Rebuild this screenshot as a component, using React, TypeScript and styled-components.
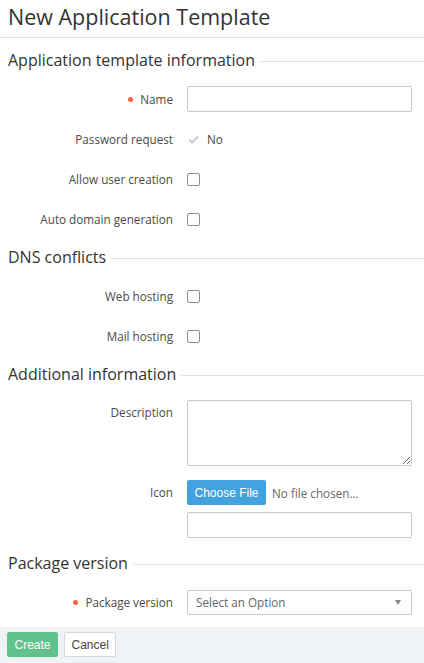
import React from 'react'
import styled, { createGlobalStyle } from 'styled-components'

const GlobalStyle = createGlobalStyle`
	html, body {
		margin: 0;
		padding: 0;
		background: #fff;
	}
	body {
		font-family: 'Open Sans', 'Noto Sans', sans-serif;
		color: #444;
	}
	* {
		box-sizing: border-box;
	}
`

const App: React.FC = () => {
	return (
		<StyledPage>
			<GlobalStyle />
			<StyledHeader>
				<StyledTitle>New Application Template</StyledTitle>
			</StyledHeader>
			<StyledForm>
				<StyledSection>
					<SectionTitle>Application template information</SectionTitle>
					<Field label="Name" required>
						<StyledInput type="text" />
					</Field>
					<Field label="Password request">
						<StyledStatic>
							<CheckIcon />
							<span>No</span>
						</StyledStatic>
					</Field>
					<Field label="Allow user creation">
						<StyledCheckbox type="checkbox" />
					</Field>
					<Field label="Auto domain generation">
						<StyledCheckbox type="checkbox" />
					</Field>
				</StyledSection>

				<StyledSection>
					<SectionTitle>DNS conflicts</SectionTitle>
					<Field label="Web hosting">
						<StyledCheckbox type="checkbox" />
					</Field>
					<Field label="Mail hosting">
						<StyledCheckbox type="checkbox" />
					</Field>
				</StyledSection>

				<StyledSection>
					<SectionTitle>Additional information</SectionTitle>
					<Field label="Description" top>
						<StyledTextarea />
					</Field>
					<Field label="Icon" top>
						<StyledStack>
							<StyledFileRow>
								<StyledFileButton type="button">Choose File</StyledFileButton>
								<StyledFileText>No file chosen...</StyledFileText>
							</StyledFileRow>
							<StyledInput type="text" />
						</StyledStack>
					</Field>
				</StyledSection>

				<StyledSection>
					<SectionTitle>Package version</SectionTitle>
					<Field label="Package version" required>
						<StyledSelect>
							<span>Select an Option</span>
							<StyledCaret />
						</StyledSelect>
					</Field>
				</StyledSection>
			</StyledForm>
			<StyledFooter>
				<StyledButton variant="primary">Create</StyledButton>
				<StyledButton>Cancel</StyledButton>
			</StyledFooter>
		</StyledPage>
	)
}

const SectionTitle: React.FC<{ children: React.ReactNode }> = ({ children }) => (
	<StyledSectionTitle>
		<span>{children}</span>
		<StyledRule />
	</StyledSectionTitle>
)

interface FieldProps {
	label: string
	required?: boolean
	top?: boolean
	children: React.ReactNode
}

const Field: React.FC<FieldProps> = ({ label, required, top, children }) => (
	<StyledRow>
		<StyledLabel $top={top}>
			{required && <StyledDot />}
			{label}
		</StyledLabel>
		<StyledControl>{children}</StyledControl>
	</StyledRow>
)

const CheckIcon: React.FC = () => (
	<svg width="11" height="9" viewBox="0 0 11 9">
		<polyline
			points="1,4.5 4,7.5 10,1.5"
			fill="none"
			stroke="#c9ccd1"
			strokeWidth="2"
		/>
	</svg>
)

const StyledPage = styled.div`
	width: 424px;
	min-height: 663px;
	display: flex;
	flex-direction: column;
`

const StyledHeader = styled.div`
	height: 38px;
	padding: 0 8px;
	border-bottom: 1px solid #dfe2e8;
	display: flex;
	align-items: center;
`

const StyledTitle = styled.h1`
	margin: 0;
	font-size: 21.5px;
	font-weight: 400;
	color: #333;
	line-height: 1;
	margin-top: -3px;
`

const StyledForm = styled.div`
	display: flex;
	flex-direction: column;
	gap: 13px;
	padding: 10px 12px 12px 8px;
`

const StyledSection = styled.div`
	display: flex;
	flex-direction: column;
	gap: 14px;
`

const StyledSectionTitle = styled.div`
	height: 24px;
	display: flex;
	align-items: center;
	gap: 5px;
	margin-right: -12px;
	font-size: 16px;
	color: #333;
	white-space: nowrap;
`

const StyledRule = styled.div`
	flex: 1;
	height: 1px;
	margin-top: 2px;
	background: #dfe2e8;
`

const StyledRow = styled.div`
	display: grid;
	grid-template-columns: 165px 1fr;
	column-gap: 14px;
	min-height: 26px;
`

const StyledLabel = styled.div<{ $top?: boolean }>`
	display: flex;
	align-items: ${(props) => (props.$top ? 'flex-start' : 'center')};
	justify-content: flex-end;
	padding-top: ${(props) => (props.$top ? '4px' : '0')};
	font-size: 11.7px;
	color: #4a4a4a;
	white-space: nowrap;
`

const StyledDot = styled.span`
	width: 5px;
	height: 5px;
	border-radius: 50%;
	background: #f2643a;
	margin-right: 7px;
	align-self: center;
`

const StyledControl = styled.div`
	display: flex;
	align-items: center;
`

const StyledInput = styled.input`
	width: 100%;
	height: 26px;
	border: 1px solid #c5c9cf;
	border-radius: 2px;
	padding: 0 8px;
	font: inherit;
	outline: none;
`

const StyledTextarea = styled.textarea`
	width: 100%;
	height: 66px;
	border: 1px solid #c5c9cf;
	border-radius: 2px;
	padding: 6px 8px;
	font: inherit;
	outline: none;
	margin: 0;
	display: block;
`

const StyledStatic = styled.div`
	display: flex;
	align-items: center;
	gap: 8px;
	padding-left: 1px;
	font-size: 11.7px;
	color: #444;
`

const StyledCheckbox = styled.input`
	appearance: none;
	width: 13px;
	height: 13px;
	margin: 0;
	border: 1px solid #8a8d92;
	border-radius: 2px;
	background: #fff;
`

const StyledStack = styled.div`
	width: 100%;
	display: flex;
	flex-direction: column;
	gap: 7px;
`

const StyledFileRow = styled.div`
	display: flex;
	align-items: center;
	gap: 6px;
`

const StyledFileButton = styled.button`
	height: 25px;
	padding: 0 7.5px;
	border: none;
	border-radius: 2px;
	background: #42a2de;
	color: #fff;
	font-family: 'Liberation Sans', Arial, sans-serif;
	font-size: 12px;
`

const StyledFileText = styled.span`
	font-size: 11.7px;
	color: #666;
`

const StyledSelect = styled.div`
	width: 100%;
	height: 25px;
	border: 1px solid #c5c9cf;
	border-radius: 2px;
	padding: 0 8px;
	display: flex;
	align-items: center;
	justify-content: space-between;
	font-size: 11.7px;
	color: #666;
`

const StyledCaret = styled.span`
	width: 0;
	height: 0;
	border-left: 3.5px solid transparent;
	border-right: 3.5px solid transparent;
	border-top: 5px solid #888;
	margin-right: 2px;
`

const StyledFooter = styled.div`
	flex: 1;
	background: #eff3f6;
	padding: 5px 7px;
	display: flex;
	align-items: flex-start;
	gap: 6px;
`

const StyledButton = styled.button<{ variant?: 'primary' }>`
	height: 25px;
	padding: 0 6.5px;
	border-radius: 2px;
	font-family: 'Liberation Sans', Arial, sans-serif;
	font-size: 12px;
	border: 1px solid ${(props) => (props.variant === 'primary' ? '#62c28e' : '#d6dade')};
	background: ${(props) => (props.variant === 'primary' ? '#62c28e' : '#fff')};
	color: ${(props) => (props.variant === 'primary' ? '#fff' : '#444')};
`

export default App
